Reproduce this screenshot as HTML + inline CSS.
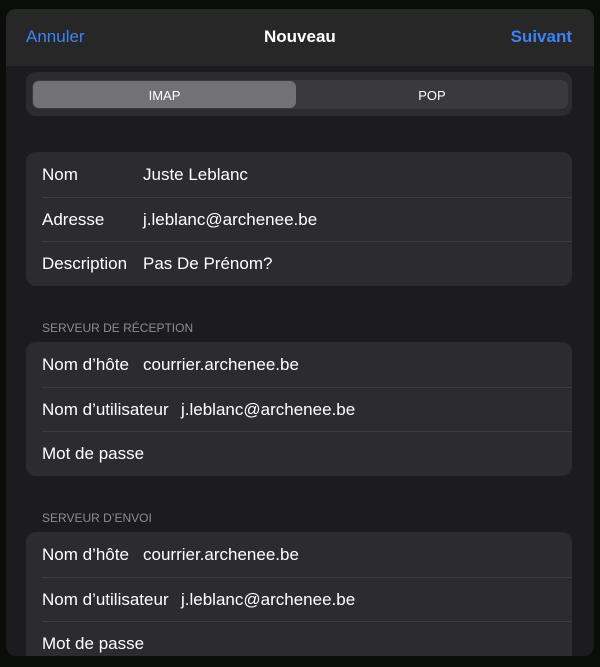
<!DOCTYPE html><html><head><style>
body{margin:0;width:600px;height:667px;background:#0b0d0a;overflow:hidden;font-family:"Liberation Sans",sans-serif;position:relative}
.sheet{position:absolute;left:6px;top:9px;width:588px;height:647px;background:#1c1c1e;border-radius:10px;overflow:hidden}
.hdr{position:absolute;left:0;top:0;width:588px;height:57px;background:#272727}
.hdr span{position:absolute;top:18px;font-size:17px}
.card{position:absolute;left:20px;width:546px;background:#2c2c2e;border-radius:10px}
.row{height:44.7px;position:relative;color:#fff;font-size:17px}
.row+.row:before{content:"";position:absolute;left:16px;right:0;top:0;border-top:1px solid #3d3d40}
.row .l{position:absolute;left:16px;top:13px}
.row .v{position:absolute;top:13px}
.sec{position:absolute;left:36px;color:#8d8d92;font-size:12px}
</style></head><body>
<div class="sheet">
<div class="hdr"><span style="left:20px;color:#3b82f6">Annuler</span><span style="left:258px;color:#fff;font-weight:bold">Nouveau</span><span style="right:22px;color:#3b82f6;font-weight:bold">Suivant</span></div>
<div class="card" style="top:63px;height:44px">
<div style="position:absolute;left:6px;top:8px;width:536px;height:29px;background:#3a3a3c;border-radius:7px"></div>
<div style="position:absolute;left:7px;top:9px;width:263px;height:27px;background:#727276;border-radius:6px"></div>
<div style="position:absolute;left:7px;top:16px;width:263px;text-align:center;color:#fff;font-size:13px">IMAP</div>
<div style="position:absolute;left:270px;top:16px;width:272px;text-align:center;color:#fff;font-size:13px">POP</div>
</div>
<div class="card" style="top:143px">
<div class="row"><span class="l">Nom</span><span class="v" style="left:117px">Juste Leblanc</span></div>
<div class="row"><span class="l">Adresse</span><span class="v" style="left:117px">j.leblanc@archenee.be</span></div>
<div class="row"><span class="l">Description</span><span class="v" style="left:117px">Pas De Prénom?</span></div>
</div>
<div class="sec" style="top:312px">SERVEUR DE RÉCEPTION</div>
<div class="card" style="top:333px">
<div class="row"><span class="l">Nom d’hôte</span><span class="v" style="left:117px">courrier.archenee.be</span></div>
<div class="row"><span class="l">Nom d’utilisateur</span><span class="v" style="left:155px">j.leblanc@archenee.be</span></div>
<div class="row"><span class="l">Mot de passe</span></div>
</div>
<div class="sec" style="top:502px">SERVEUR D’ENVOI</div>
<div class="card" style="top:523px;border-radius:10px 10px 0 0">
<div class="row"><span class="l">Nom d’hôte</span><span class="v" style="left:117px">courrier.archenee.be</span></div>
<div class="row"><span class="l">Nom d’utilisateur</span><span class="v" style="left:155px">j.leblanc@archenee.be</span></div>
<div class="row"><span class="l">Mot de passe</span></div>
</div>
</div>
</body></html>
